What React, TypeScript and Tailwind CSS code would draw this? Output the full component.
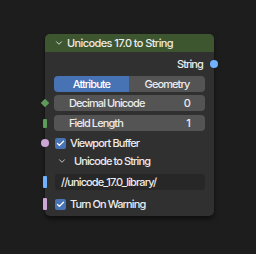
import React from "react";
import { ChevronDown, Check } from "lucide-react";

const font = { fontFamily: "Inter, 'Noto Sans', sans-serif" };

function Checkbox() {
  return (
    <div className="w-[11px] h-[11px] rounded-[2px] bg-[#4772b3] flex items-center justify-center">
      <Check className="w-[9px] h-[9px] text-white" strokeWidth={3.5} />
    </div>
  );
}

export default function App() {
  return (
    <div className="w-[256px] h-[254px] bg-[#1d1d1d] overflow-hidden" style={font}>
      <div className="relative ml-[45px] mt-[34px] w-[169px] rounded-[5px] bg-[#303030] shadow-[0_3px_4px_rgba(0,0,0,0.5)] text-[11px] font-medium tracking-[-0.9px] text-[#ececec]">
        {/* header */}
        <div className="h-[18px] rounded-t-[5px] bg-[#3d5630] flex items-center pl-[9px] gap-[3px] tracking-[-0.6px]">
          <ChevronDown className="w-[10px] h-[10px] text-[#e6e6e6]" strokeWidth={2.2} />
          <span className="leading-none">Unicodes 17.0 to String</span>
        </div>

        <div className="px-[9px] pb-[4px]">
          {/* output */}
          <div className="relative h-[16px] mt-[4px] flex items-center justify-end pr-[2px]">
            <span>String</span>
            <span className="absolute right-[-13px] top-[4px] w-[8px] h-[8px] rounded-full bg-[#70b2ff]" />
          </div>

          {/* segmented */}
          <div className="relative h-[16px] mt-[4px] flex rounded-[4px] overflow-hidden">
            <div className="w-[75px] bg-[#4772b3] text-white flex items-center justify-center">Attribute</div>
            <div className="flex-1 bg-[#545454] flex items-center justify-center">Geometry</div>
            <span className="absolute left-[-11px] top-[4px] w-[4px] h-[10px] rounded-[1px] bg-[#6e6e6e]" />
          </div>

          <div className="relative h-[16px] mt-[3px] rounded-[4px] bg-[#545454] flex items-center justify-between pl-[15px] pr-[15px]">
            <span>Decimal Unicode</span>
            <span>0</span>
            <span className="absolute left-[-12px] top-[5px] w-[6px] h-[6px] rotate-45 bg-[#5e9b5a]" />
          </div>

          <div className="relative h-[16px] mt-[4px] rounded-[4px] bg-[#545454] flex items-center justify-between pl-[15px] pr-[15px]">
            <span>Field Length</span>
            <span>1</span>
            <span className="absolute left-[-11px] top-[4px] w-[4px] h-[9px] rounded-[1px] bg-[#5e9b5a]" />
          </div>

          <div className="relative h-[16px] mt-[4px] flex items-center gap-[4px] pl-[1px]">
            <Checkbox />
            <span>Viewport Buffer</span>
            <span className="absolute left-[-13px] top-[4px] w-[8px] h-[8px] rounded-full bg-[#cca6d6]" />
          </div>

          <div className="h-[16px] mt-[2px] flex items-center gap-[7px] pl-[3px]">
            <ChevronDown className="w-[10px] h-[10px] text-[#d0d0d0]" strokeWidth={2.2} />
            <span>Unicode to String</span>
          </div>

          <div className="relative h-[16px] mt-[5px] rounded-[3px] bg-[#272727] flex items-center pl-[6px] ml-[1px]">
            <span>//unicode_17.0_library/</span>
            <span className="absolute left-[-12px] top-[2px] w-[4px] h-[12px] rounded-[1px] bg-[#70b2ff]" />
          </div>

          <div className="relative h-[16px] mt-[6px] flex items-center gap-[4px] pl-[1px]">
            <Checkbox />
            <span>Turn On Warning</span>
            <span className="absolute left-[-11px] top-[2px] w-[4px] h-[12px] rounded-[1px] bg-[#cca6d6]" />
          </div>
        </div>
      </div>
    </div>
  );
}
